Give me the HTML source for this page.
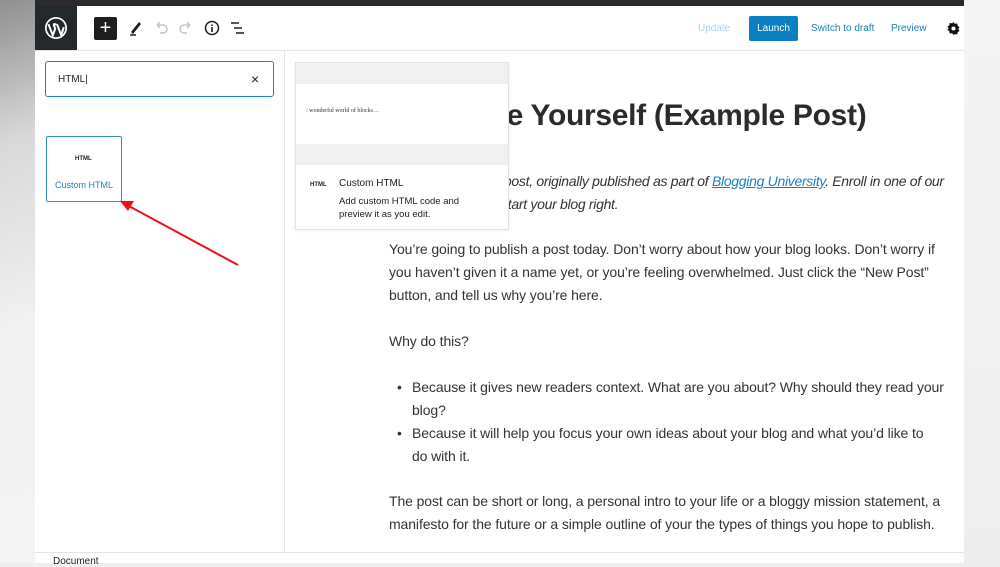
<!DOCTYPE html>
<html><head><style>
*{margin:0;padding:0;box-sizing:border-box}
body{width:1000px;height:563px;overflow:hidden;position:relative;background:#eee;font-family:"Liberation Sans",sans-serif}
.a{position:absolute}
.t{position:absolute;white-space:nowrap;font-size:14px;color:#333;letter-spacing:-0.1px}
</style></head><body>
<div class="a" style="left:0;top:0;width:35px;height:563px;background:linear-gradient(160deg,#8f8f8f 0%,#d8d8d8 25%,#f2f2f2 60%,#f4f4f4 100%)"></div>
<div class="a" style="left:964px;top:0;width:36px;height:563px;background:linear-gradient(180deg,#f4f4f4,#ededed)"></div>
<div class="a" style="left:35px;top:0;width:929px;height:563px;background:#fff"></div>
<div class="a" style="left:35px;top:0;width:929px;height:6px;background:#2b2b2d"></div>
<div class="a" style="left:35px;top:6px;width:42px;height:44px;background:#23282d"></div>
<svg class="a" style="left:44px;top:16px" width="24" height="24" viewBox="0 0 24 24"><circle cx="12" cy="12" r="11" fill="#fff"/><circle cx="12" cy="12" r="9.3" fill="#23282d"/><path d="M4.5 8.2l4.3 11.2 2.4-6.6-1.6-4.6M9 8.2h3.3M13 8.2l4.2 11 2.6-8" stroke="#fff" stroke-width="2" fill="none"/></svg>
<div class="a" style="left:35px;top:50px;width:929px;height:1px;background:#e2e4e7"></div>
<div class="a" style="left:94px;top:17px;width:23px;height:23px;background:#1e1e1e;border-radius:2px;color:#fff;font-size:20px;line-height:22px;text-align:center">+</div>
<svg class="a" style="left:128px;top:19px" width="16" height="18" viewBox="0 0 16 18"><path d="M3 13l8-10 2 2-8 10z" fill="#1e1e1e"/><path d="M2 16h6" stroke="#1e1e1e" stroke-width="1.5"/></svg>
<svg class="a" style="left:153px;top:21px" width="16" height="14" viewBox="0 0 16 14"><path d="M4 4h6a4 4 0 010 8H7M4 4l3-3M4 4l3 3" stroke="#c3c4c7" stroke-width="1.4" fill="none"/></svg>
<svg class="a" style="left:178px;top:21px" width="16" height="14" viewBox="0 0 16 14"><path d="M12 4H6a4 4 0 000 8h3M12 4L9 1M12 4L9 7" stroke="#c3c4c7" stroke-width="1.4" fill="none"/></svg>
<svg class="a" style="left:204px;top:20px" width="16" height="16" viewBox="0 0 16 16"><circle cx="8" cy="8" r="6.5" stroke="#1e1e1e" stroke-width="1.5" fill="none"/><path d="M8 7v5M8 4.5v1.5" stroke="#1e1e1e" stroke-width="1.6"/></svg>
<svg class="a" style="left:230px;top:21px" width="16" height="14" viewBox="0 0 16 14"><path d="M1 2h8M4 7h8M6 12h8" stroke="#1e1e1e" stroke-width="1.5"/></svg>
<div class="t" style="left:698px;top:23px;font-size:10px;color:#a7d3ea;letter-spacing:0">Update</div>
<div class="a" style="left:749px;top:16px;width:49px;height:25px;background:#0a7fc2;border-radius:2px;color:#fff;font-size:10px;line-height:25px;text-align:center">Launch</div>
<div class="t" style="left:811px;top:23px;font-size:10px;color:#1a7db8;letter-spacing:0">Switch to draft</div>
<div class="t" style="left:891px;top:23px;font-size:10px;color:#1a7db8;letter-spacing:0">Preview</div>
<svg class="a" style="left:947px;top:22px" width="13" height="13" viewBox="0 0 14 14"><path d="M7 0l1.5 2 2.5-.5.5 2.5 2 1.5-1.3 2 1.3 2-2 1.5-.5 2.5-2.5-.5L7 14l-1.5-2-2.5.5-.5-2.5-2-1.5L1.8 7 .5 5l2-1.5.5-2.5 2.5.5z" fill="#111"/><circle cx="7" cy="7" r="2.2" fill="#fff"/></svg>
<div class="a" style="left:284px;top:51px;width:1px;height:501px;background:#e2e4e7"></div>
<div class="a" style="left:45px;top:61px;width:229px;height:36px;border:1.5px solid #1e85be;border-radius:3px"></div>
<div class="t" style="left:58px;top:74px;font-size:10px;color:#222;letter-spacing:0">HTML|</div>
<div class="t" style="left:251px;top:71px;font-size:14px;color:#222">×</div>
<div class="a" style="left:46px;top:136px;width:76px;height:66px;border:1px solid #3a8fc7;border-radius:2px"></div>
<div class="t" style="left:75px;top:156px;font-size:6px;font-weight:bold;color:#222;letter-spacing:0">HTML</div>
<div class="t" style="left:55px;top:180px;font-size:9px;color:#2a7fb6;letter-spacing:0">Custom HTML</div>
<svg class="a" style="left:115px;top:195px" width="130" height="75" viewBox="0 0 130 75"><path d="M123 70L12 10" stroke="#e11" stroke-width="2"/><path d="M5 6l14 0-6 10z" fill="#e11"/></svg>
<div class="a" style="left:35px;top:552px;width:929px;height:1px;background:#e2e4e7"></div>
<div class="t" style="left:53px;top:556px;font-size:10px;color:#222;letter-spacing:0">Document</div>
<div class="t" style="left:389px;top:99px;font-size:30px;font-weight:bold;color:#2b2b2b;letter-spacing:-0.3px">Introduce Yourself (Example Post)</div>
<div class="t" style="left:389px;top:173px;font-style:italic;letter-spacing:-0.3px">This is an example post, originally published as part of <span style="color:#1e7dc4;text-decoration:underline">Blogging University</span>. Enroll in one of our</div>
<div class="t" style="left:389px;top:196px;font-style:italic;letter-spacing:-0.3px">ten programs, and start your blog right.</div>
<div class="t" style="left:389px;top:241px">You’re going to publish a post today. Don’t worry about how your blog looks. Don’t worry if</div>
<div class="t" style="left:389px;top:264px">you haven’t given it a name yet, or you’re feeling overwhelmed. Just click the “New Post”</div>
<div class="t" style="left:389px;top:287px">button, and tell us why you’re here.</div>
<div class="t" style="left:389px;top:333px">Why do this?</div>
<div class="t" style="left:397px;top:379px">•</div>
<div class="t" style="left:412px;top:379px">Because it gives new readers context. What are you about? Why should they read your</div>
<div class="t" style="left:412px;top:402px">blog?</div>
<div class="t" style="left:397px;top:425px">•</div>
<div class="t" style="left:412px;top:425px">Because it will help you focus your own ideas about your blog and what you’d like to</div>
<div class="t" style="left:412px;top:448px">do with it.</div>
<div class="t" style="left:389px;top:493px">The post can be short or long, a personal intro to your life or a bloggy mission statement, a</div>
<div class="t" style="left:389px;top:516px">manifesto for the future or a simple outline of your the types of things you hope to publish.</div>
<div class="a" style="left:295px;top:62px;width:214px;height:168px;background:#fff;border:1px solid #e2e4e7;box-shadow:0 1px 3px rgba(0,0,0,.08)"></div>
<div class="a" style="left:296px;top:63px;width:212px;height:21px;background:#f0f0f0"></div>
<div class="a" style="left:296px;top:144px;width:212px;height:21px;background:#f0f0f0"></div>
<div class="t" style="left:306px;top:108px;font-family:'Liberation Serif',serif;font-size:6px;color:#333;letter-spacing:0">: wonderful world of blocks…</div>
<div class="t" style="left:310px;top:182px;font-size:6px;font-weight:bold;color:#222;letter-spacing:0">HTML</div>
<div class="t" style="left:339px;top:178px;font-size:10px;color:#1e1e1e;letter-spacing:0">Custom HTML</div>
<div class="t" style="left:339px;top:195px;font-size:9.5px;color:#1e1e1e;letter-spacing:0;line-height:13px">Add custom HTML code and<br>preview it as you edit.</div>
</body></html>
